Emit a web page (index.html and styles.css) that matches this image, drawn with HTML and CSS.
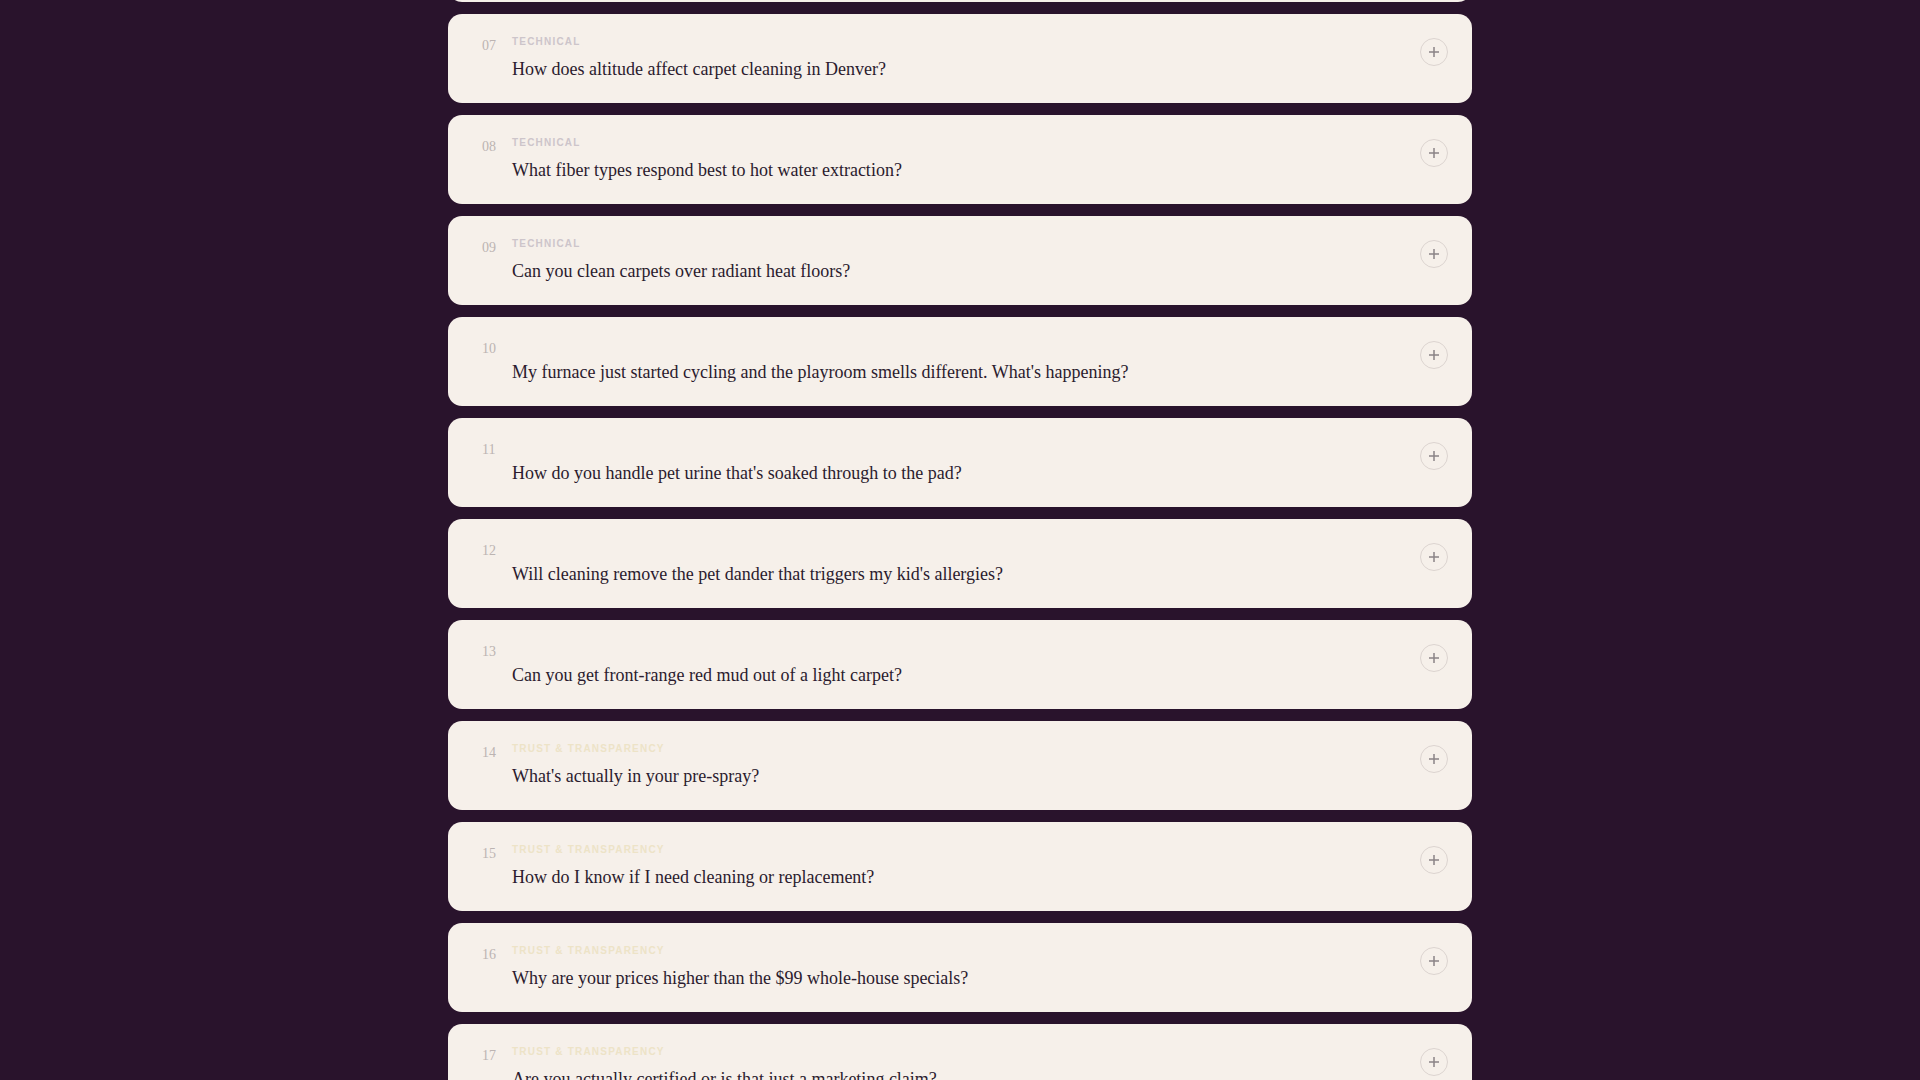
FILE: index.html
```html
<!DOCTYPE html>
<html lang="en">
<head>
    <meta charset="UTF-8">
    <meta name="viewport" content="width=device-width, initial-scale=1.0">
    <title>Carpet Cleaning FAQ</title>
    <link rel="stylesheet" href="styles.css">
</head>
<body>
    <div class="faq-list">
        <div class="faq-item">
            <span class="faq-num">06</span>
            <div class="faq-body">
                <div class="faq-cat technical">Technical</div>
                <div class="faq-question">How long does carpet take to dry after cleaning?</div>
            </div>
            <span class="faq-toggle"><svg viewBox="0 0 12 12"><path d="M6 1v10M1 6h10"/></svg></span>
        </div>

        <div class="faq-item">
            <span class="faq-num">07</span>
            <div class="faq-body">
                <div class="faq-cat technical">Technical</div>
                <div class="faq-question">How does altitude affect carpet cleaning in Denver?</div>
            </div>
            <span class="faq-toggle"><svg viewBox="0 0 12 12"><path d="M6 1v10M1 6h10"/></svg></span>
        </div>

        <div class="faq-item">
            <span class="faq-num">08</span>
            <div class="faq-body">
                <div class="faq-cat technical">Technical</div>
                <div class="faq-question">What fiber types respond best to hot water extraction?</div>
            </div>
            <span class="faq-toggle"><svg viewBox="0 0 12 12"><path d="M6 1v10M1 6h10"/></svg></span>
        </div>

        <div class="faq-item">
            <span class="faq-num">09</span>
            <div class="faq-body">
                <div class="faq-cat technical">Technical</div>
                <div class="faq-question">Can you clean carpets over radiant heat floors?</div>
            </div>
            <span class="faq-toggle"><svg viewBox="0 0 12 12"><path d="M6 1v10M1 6h10"/></svg></span>
        </div>

        <div class="faq-item">
            <span class="faq-num">10</span>
            <div class="faq-body">
                <div class="faq-cat"></div>
                <div class="faq-question">My furnace just started cycling and the playroom smells different. What's happening?</div>
            </div>
            <span class="faq-toggle"><svg viewBox="0 0 12 12"><path d="M6 1v10M1 6h10"/></svg></span>
        </div>

        <div class="faq-item">
            <span class="faq-num">11</span>
            <div class="faq-body">
                <div class="faq-cat"></div>
                <div class="faq-question">How do you handle pet urine that's soaked through to the pad?</div>
            </div>
            <span class="faq-toggle"><svg viewBox="0 0 12 12"><path d="M6 1v10M1 6h10"/></svg></span>
        </div>

        <div class="faq-item">
            <span class="faq-num">12</span>
            <div class="faq-body">
                <div class="faq-cat"></div>
                <div class="faq-question">Will cleaning remove the pet dander that triggers my kid's allergies?</div>
            </div>
            <span class="faq-toggle"><svg viewBox="0 0 12 12"><path d="M6 1v10M1 6h10"/></svg></span>
        </div>

        <div class="faq-item">
            <span class="faq-num">13</span>
            <div class="faq-body">
                <div class="faq-cat"></div>
                <div class="faq-question">Can you get front-range red mud out of a light carpet?</div>
            </div>
            <span class="faq-toggle"><svg viewBox="0 0 12 12"><path d="M6 1v10M1 6h10"/></svg></span>
        </div>

        <div class="faq-item">
            <span class="faq-num">14</span>
            <div class="faq-body">
                <div class="faq-cat trust">Trust &amp; Transparency</div>
                <div class="faq-question">What's actually in your pre-spray?</div>
            </div>
            <span class="faq-toggle"><svg viewBox="0 0 12 12"><path d="M6 1v10M1 6h10"/></svg></span>
        </div>

        <div class="faq-item">
            <span class="faq-num">15</span>
            <div class="faq-body">
                <div class="faq-cat trust">Trust &amp; Transparency</div>
                <div class="faq-question">How do I know if I need cleaning or replacement?</div>
            </div>
            <span class="faq-toggle"><svg viewBox="0 0 12 12"><path d="M6 1v10M1 6h10"/></svg></span>
        </div>

        <div class="faq-item">
            <span class="faq-num">16</span>
            <div class="faq-body">
                <div class="faq-cat trust">Trust &amp; Transparency</div>
                <div class="faq-question">Why are your prices higher than the $99 whole-house specials?</div>
            </div>
            <span class="faq-toggle"><svg viewBox="0 0 12 12"><path d="M6 1v10M1 6h10"/></svg></span>
        </div>

        <div class="faq-item">
            <span class="faq-num">17</span>
            <div class="faq-body">
                <div class="faq-cat trust">Trust &amp; Transparency</div>
                <div class="faq-question">Are you actually certified or is that just a marketing claim?</div>
            </div>
            <span class="faq-toggle"><svg viewBox="0 0 12 12"><path d="M6 1v10M1 6h10"/></svg></span>
        </div>
    </div>
</body>
</html>
```

FILE: styles.css
```css
* {
    margin: 0;
    padding: 0;
    box-sizing: border-box;
}

body {
    background-color: #29132c;
    font-family: 'Liberation Serif', 'Times New Roman', serif;
    overflow: hidden;
}

/* list is scrolled so item 06 only peeks in at the top */
.faq-list {
    width: 1024px;
    margin: -87px auto 0;
    display: flex;
    flex-direction: column;
    gap: 12px;
}

.faq-item {
    background-color: #f6f0ea;
    border-radius: 14px;
    padding: 22px 24px 21px 34px;
    display: flex;
    align-items: flex-start;
    height: 89px;
}

.faq-num {
    width: 30px;
    flex-shrink: 0;
    margin-top: 2px;
    font-size: 14px;
    line-height: 16px;
    color: #bcb4b2;
}

.faq-body {
    flex: 1;
}

.faq-cat {
    height: 12px;
    margin-bottom: 9px;
    font-family: 'Liberation Sans', Arial, sans-serif;
    font-size: 10px;
    line-height: 12px;
    font-weight: 700;
    letter-spacing: 0.12em;
    text-transform: uppercase;
}

.faq-cat.technical {
    color: #cdc5ca;
}

.faq-cat.trust {
    color: #ede3c7;
}

.faq-question {
    font-size: 18px;
    line-height: 25px;
    color: #2b1b2e;
}

.faq-toggle {
    width: 28px;
    height: 28px;
    margin-top: 2px;
    flex-shrink: 0;
    border: 1px solid #dcd4d0;
    border-radius: 50%;
    display: flex;
    align-items: center;
    justify-content: center;
}

.faq-toggle svg {
    width: 12px;
    height: 12px;
    fill: none;
    stroke: #8b8386;
    stroke-width: 1.5;
}
```
